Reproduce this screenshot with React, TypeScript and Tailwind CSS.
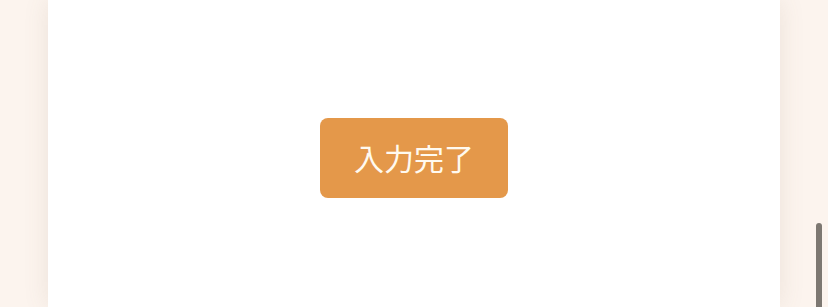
export default function App() {
  return (
    <div className="relative flex justify-center h-[307px] w-full bg-[#fcf4ee] overflow-hidden font-['Noto_Sans_CJK_JP',sans-serif]">
      {/* Panel */}
      <main className="w-[732px] h-full pt-[8px] bg-white shadow-[0_0_24px_rgba(120,100,70,0.12)] flex items-center justify-center">
        <button className="w-[188px] h-[80px] rounded-lg bg-[#e4984a] text-[#fffaf0] text-[30px] font-normal leading-none pb-[2px]">
          入力完了
        </button>
      </main>

      {/* Scrollbar thumb */}
      <div className="absolute right-[6px] top-[223px] w-[6px] h-[100px] rounded-full bg-[#7d7872]" />
    </div>
  );
}
